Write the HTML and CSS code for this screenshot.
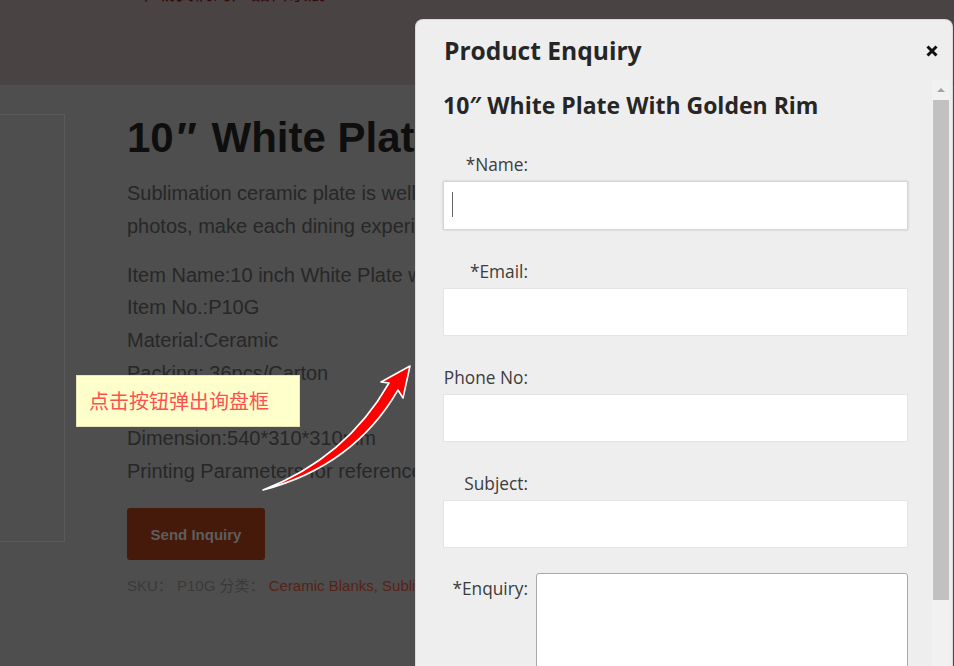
FILE: index.html
```html
<!DOCTYPE html>
<html lang="zh-CN">
<head>
<meta charset="utf-8">
<title>10″ White Plate With Golden Rim</title>
<link rel="stylesheet" href="styles.css">
</head>
<body>
<div class="page">
  <header class="topbar">
    <p class="topbar-text">下载我们的产品目录册</p>
  </header>
  <main class="product">
    <div class="gallery"></div>
    <div class="summary">
      <h1 class="product-title">10<span class="inch">″</span> White Plate With Golden Rim</h1>
      <p class="desc">Sublimation ceramic plate is well received to print your family<br>photos, make each dining experience more special and warm.</p>
      <div class="specs">
        <p>Item Name:10 inch White Plate with Golden Rim</p>
        <p>Item No.:P10G</p>
        <p>Material:Ceramic</p>
        <p>Packing: 36pcs/Carton</p>
        <p>G.W.: 15kg</p>
        <p>Dimension:540*310*310mm</p>
        <p>Printing Parameters for reference: 180°C, 120s</p>
      </div>
      <button class="btn-inquiry" type="button">Send Inquiry</button>
      <div class="meta">SKU： P10G 分类： <a class="meta-link" href="#">Ceramic Blanks, Sublimation Plates</a></div>
    </div>
  </main>
</div>

<div class="note">点击按钮弹出询盘框</div>

<svg class="arrow" viewBox="255 355 165 145" width="165" height="145" aria-hidden="true">
  <path d="M263 490 Q346 458 389 383 L381 382 L410 366 L403 398 L398 390 Q354 466 263 490 Z" fill="#ff0000" stroke="#ffffff" stroke-width="1.6" stroke-linejoin="round"/>
</svg>

<div class="modal">
  <div class="modal-head">
    <h2 class="modal-title">Product Enquiry</h2>
    <svg class="modal-close" viewBox="0 0 12 12" width="12" height="12" aria-label="close">
      <path d="M1.5 1.5 L10.5 10.5 M10.5 1.5 L1.5 10.5" stroke="#111" stroke-width="3" stroke-linecap="butt"/>
    </svg>
  </div>
  <div class="modal-body">
    <form class="enquiry-form">
      <h3 class="form-product">10″ White Plate With Golden Rim</h3>
      <div class="row">
        <label class="lbl">*Name:</label>
        <div class="field-wrap">
          <input class="field field-focus" type="text">
          <span class="caret"></span>
        </div>
      </div>
      <div class="row">
        <label class="lbl">*Email:</label>
        <input class="field" type="text">
      </div>
      <div class="row">
        <label class="lbl">Phone No:</label>
        <input class="field" type="text">
      </div>
      <div class="row row-tight">
        <label class="lbl">Subject:</label>
        <input class="field" type="text">
      </div>
      <div class="row-inline">
        <label class="lbl lbl-top">*Enquiry:</label>
        <textarea class="area"></textarea>
      </div>
    </form>
    <div class="vscroll">
      <div class="vscroll-up"><span class="tri"></span></div>
      <div class="vscroll-thumb"></div>
    </div>
  </div>
</div>
</body>
</html>
```
FILE: styles.css
```css
html, body {
  margin: 0;
  padding: 0;
}
body {
  width: 954px;
  height: 666px;
  overflow: hidden;
  background: #4e4e4e;
  font-family: "Liberation Sans", Arial, sans-serif;
  position: relative;
}
.page {
  width: 954px;
}
.topbar {
  height: 85px;
  background: #4a4343;
  overflow: hidden;
}
.topbar-text {
  margin: -18px 0 0 0;
  padding-left: 137px;
  font-family: "Noto Sans CJK SC", sans-serif;
  font-size: 19px;
  line-height: 20px;
  color: #330909;
}
.product {
  display: flex;
  gap: 62px;
  padding-top: 29px;
}
.gallery {
  flex: none;
  width: 401px;
  height: 428px;
  box-sizing: border-box;
  border: 1px solid #5a5a5a;
  margin-left: -336px;
}
.summary {
  flex: none;
  width: 760px;
  white-space: nowrap;
}
.product-title {
  margin: 0;
  font-size: 42px;
  line-height: 48px;
  font-weight: bold;
  color: #0e0e0e;
}
.inch {
  margin-left: 3px;
  margin-right: 3px;
}
.desc {
  margin: 15px 0 0;
  font-size: 20px;
  line-height: 32.8px;
  color: #272727;
}
.specs {
  margin-top: 16px;
}
.specs p {
  margin: 0;
  font-size: 20px;
  line-height: 32.67px;
  color: #272727;
}
.btn-inquiry {
  display: block;
  margin-top: 21px;
  width: 138px;
  height: 52px;
  border: 0;
  border-radius: 3px;
  background: #461a0a;
  color: #5e5e5e;
  font-family: "Liberation Sans", Arial, sans-serif;
  font-weight: bold;
  font-size: 15px;
  padding: 0;
}
.meta {
  margin-top: 16px;
  font-size: 15px;
  line-height: 20px;
  color: #3a3a3a;
  font-family: "Liberation Sans", "Noto Sans CJK SC", sans-serif;
}
.meta-link {
  color: #582216;
  text-decoration: none;
}

/* annotation */
.note {
  position: absolute;
  left: 76px;
  top: 375px;
  width: 224px;
  height: 52px;
  box-sizing: border-box;
  background: #ffffcb;
  border: 1px solid #e6e6b4;
  padding-left: 12px;
  font-family: "Noto Sans CJK SC", sans-serif;
  font-size: 20px;
  line-height: 50px;
  color: #ff5050;
}
.arrow {
  position: absolute;
  left: 255px;
  top: 355px;
}

/* modal */
.modal {
  position: absolute;
  left: 416px;
  top: 20px;
  right: 2px;
  bottom: -40px;
  background: #eeeeee;
  border-radius: 7px;
  box-shadow: 0 0 0 1px #d9d9d9;
  display: flex;
  flex-direction: column;
  overflow: hidden;
  font-family: "Open Sans", sans-serif;
}
.modal-head {
  flex: none;
  height: 60px;
  box-sizing: border-box;
  padding: 17px 14px 0 28px;
  display: flex;
  justify-content: space-between;
  align-items: flex-start;
}
.modal-title {
  margin: 0;
  font-size: 24.6px;
  line-height: 28px;
  font-weight: bold;
  color: #262626;
}
.modal-close {
  margin-top: 8px;
}
.modal-body {
  flex: 1;
  display: flex;
  min-height: 0;
}
.enquiry-form {
  flex: 1;
  padding: 11px 24px 0 27px;
  margin: 0;
}
.form-product {
  margin: 0 0 36px;
  font-size: 23px;
  line-height: 28px;
  font-weight: bold;
  color: #262626;
}
.row {
  display: flex;
  flex-direction: column;
  margin-bottom: 32px;
}
.row-tight {
  margin-bottom: 25px;
}
.lbl {
  display: block;
  width: 85px;
  text-align: right;
  white-space: nowrap;
  font-size: 17.3px;
  line-height: 20px;
  color: #3c3c3c;
}
.row .lbl {
  margin-bottom: 6px;
}
.field-wrap {
  position: relative;
}
.field {
  display: block;
  width: 100%;
  height: 48px;
  box-sizing: border-box;
  border: 1px solid #e4e4e4;
  background: #fff;
  margin: 0;
  padding: 0 8px;
  outline: none;
}
.field-focus {
  height: 49px;
  border-color: #d6d6d6;
  box-shadow: 0 0 2px rgba(0, 0, 0, 0.18);
}
.caret {
  position: absolute;
  left: 9px;
  top: 11px;
  width: 1px;
  height: 25px;
  background: #666;
}
.row-inline {
  display: flex;
  align-items: flex-start;
  gap: 8px;
}
.lbl-top {
  padding-top: 6px;
}
.area {
  flex: 1;
  height: 130px;
  box-sizing: border-box;
  border: 1px solid #a8a8a8;
  border-radius: 3px;
  background: #fff;
  margin: 0;
  resize: none;
  outline: none;
}
.vscroll {
  flex: none;
  width: 18px;
  margin-right: 2px;
  background: #f1f1f1;
  display: flex;
  flex-direction: column;
  align-items: center;
}
.vscroll-up {
  height: 20px;
  width: 100%;
  display: flex;
  align-items: center;
  justify-content: center;
}
.tri {
  width: 0;
  height: 0;
  border-left: 4px solid transparent;
  border-right: 4px solid transparent;
  border-bottom: 4px solid #a3a3a3;
}
.vscroll-thumb {
  width: 16px;
  height: 500px;
  background: #c1c1c1;
}
```
